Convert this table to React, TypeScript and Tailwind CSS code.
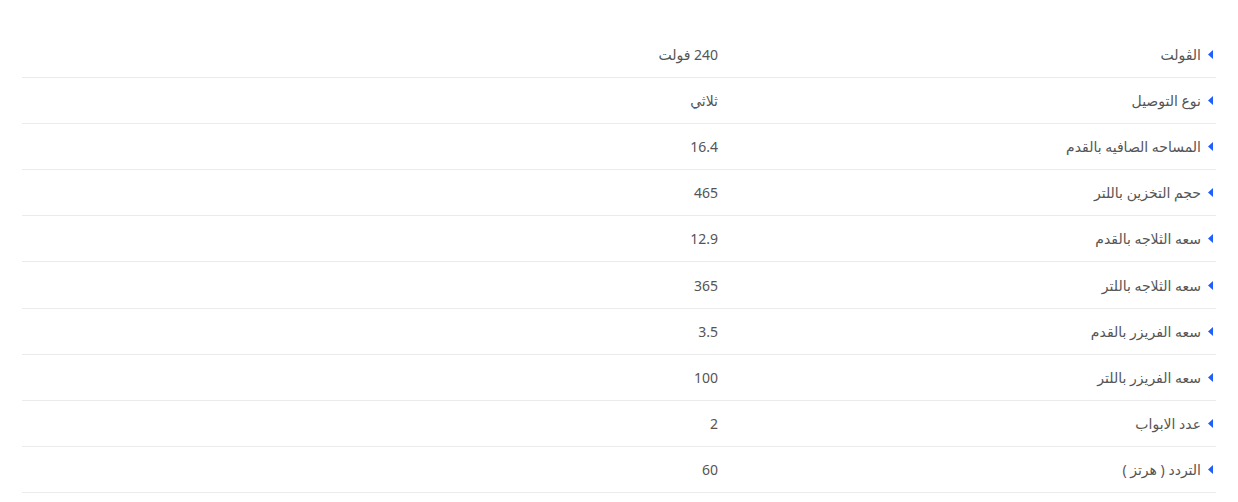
import React from "react";

const rows: [string, string][] = [
  ["الڤولت", "240 فولت"],
  ["نوع التوصيل", "ثلاثي"],
  ["المساحه الصافيه بالقدم", "16.4"],
  ["حجم التخزين باللتر", "465"],
  ["سعه الثلاجه بالقدم", "12.9"],
  ["سعه الثلاجه باللتر", "365"],
  ["سعه الفريزر بالقدم", "3.5"],
  ["سعه الفريزر باللتر", "100"],
  ["عدد الابواب", "2"],
  ["التردد ( هرتز )", "60"],
];

export default function App() {
  return (
    <div
      dir="rtl"
      className="w-[1238px] h-[502px] bg-white pt-[32px] px-[22px]"
      style={{ fontFamily: '"Noto Sans", "DejaVu Sans", sans-serif' }}
    >
      <div className="flex flex-col">
        {rows.map(([label, value], i) => (
          <div
            key={i}
            className="flex items-center h-[46.1px] border-b border-[#ebebeb] text-[14px] text-[#555]"
          >
            <div className="w-[498px] flex items-center gap-[7px] pr-[3px]">
              <svg width="5" height="9" viewBox="0 0 5 9" className="shrink-0">
                <polygon points="5,0 5,9 0,4.5" fill="#1f5eff" />
              </svg>
              <span>{label}</span>
            </div>
            <div className="flex-1">{value}</div>
          </div>
        ))}
      </div>
    </div>
  );
}
